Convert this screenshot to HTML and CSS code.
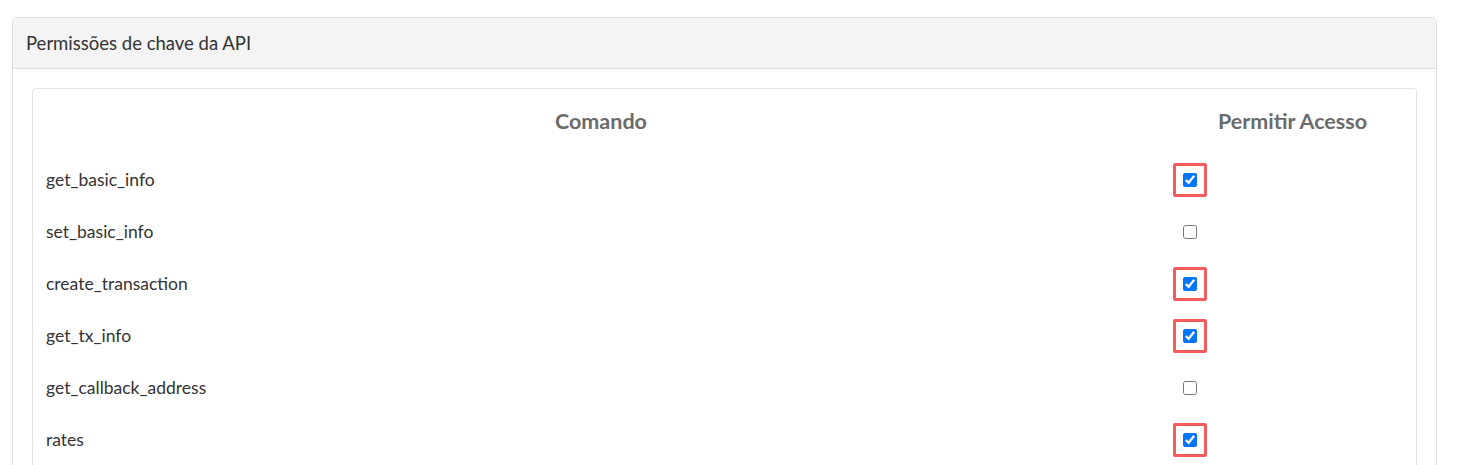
FILE: index.html
```html
<!DOCTYPE html>
<html lang="pt">
<head>
<meta charset="utf-8">
<title>Permissões de chave da API</title>
<link rel="stylesheet" href="styles.css">
</head>
<body>
<div class="page">
  <section class="card">
    <header class="card-header">Permissões de chave da API</header>
    <div class="card-body">
      <div class="inner-card">
        <table class="perm-table">
          <thead>
            <tr><th class="col-cmd">Comando</th><th class="col-access">Permitir Acesso</th></tr>
          </thead>
          <tbody>
            <tr><td class="cell-cmd">get_basic_info</td><td class="cell-check"><span class="hl"><input type="checkbox" checked></span></td></tr>
            <tr><td class="cell-cmd">set_basic_info</td><td class="cell-check"><span class="plain"><input type="checkbox"></span></td></tr>
            <tr><td class="cell-cmd">create_transaction</td><td class="cell-check"><span class="hl"><input type="checkbox" checked></span></td></tr>
            <tr><td class="cell-cmd">get_tx_info</td><td class="cell-check"><span class="hl"><input type="checkbox" checked></span></td></tr>
            <tr><td class="cell-cmd">get_callback_address</td><td class="cell-check"><span class="plain"><input type="checkbox"></span></td></tr>
            <tr><td class="cell-cmd">rates</td><td class="cell-check"><span class="hl"><input type="checkbox" checked></span></td></tr>
          </tbody>
        </table>
      </div>
    </div>
  </section>
</div>
</body>
</html>
```
FILE: styles.css
```css
* { box-sizing: border-box; }
html, body { margin: 0; padding: 0; background: #fff; }
body {
  font-family: Lato, "Open Sans", "Liberation Sans", sans-serif;
  color: #333;
  font-size: 16px;
}
.page { padding: 17px 23px 0 12px; }
.card {
  border: 1px solid #dfdfdf;
  border-radius: 5px;
  background: #fff;
}
.card-header {
  height: 51px;
  background: #f4f4f4;
  border-bottom: 1px solid #dfdfdf;
  border-radius: 5px 5px 0 0;
  padding: 0 13px;
  display: flex;
  align-items: center;
  font-size: 18.5px;
  color: #333;
}
.card-body { padding: 19px 19px 0 19px; }
.inner-card {
  border: 1px solid #e3e3e3;
  border-bottom: none;
  border-radius: 4px 4px 0 0;
}
.perm-table {
  width: 100%;
  border-collapse: collapse;
}
.perm-table th {
  height: 65px;
  padding: 0 13px 2px;
  font-size: 21.5px;
  font-weight: 700;
  color: #6b6b6b;
  text-align: center;
  vertical-align: middle;
}
.perm-table th.col-access { width: 247px; }
.perm-table td {
  height: 52px;
  padding: 0 13px;
  vertical-align: middle;
  font-size: 17.5px;
  color: #333;
}
.perm-table td.cell-cmd { padding-bottom: 2px; }
.perm-table td.cell-check { padding-left: 4px; }
.hl, .plain {
  display: inline-flex;
  align-items: center;
  justify-content: center;
  width: 34px;
  height: 34px;
  vertical-align: middle;
}
.hl {
  border: 3px solid #f25c5c;
  border-radius: 2px;
}
.hl input, .plain input {
  width: 14px;
  height: 14px;
  margin: 0;
  accent-color: #0075ff;
}
```
